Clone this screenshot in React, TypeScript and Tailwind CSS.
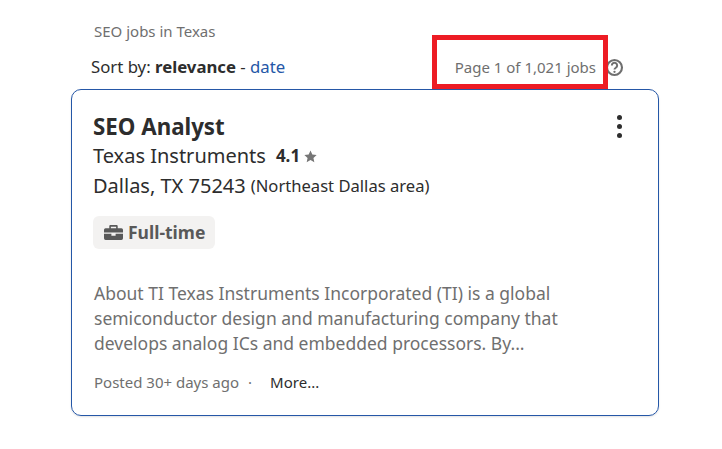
import React from "react";

export default function App() {
  return (
    <div className="relative h-[449px] w-[722px] overflow-hidden bg-white pl-[71px] pr-[63px] text-[#2d2d2d] [font-family:'Noto_Sans',sans-serif]">
      <div className="pl-[23px] pt-[21px] text-[15px] leading-[20px] text-[#6f6f6f]">SEO jobs in Texas</div>
      <div className="mt-[15px] flex h-[22px] items-center justify-between pl-[20px] pr-[35px]">
        <div className="text-[16.75px] leading-[22px]">
          Sort by: <b className="font-bold">relevance</b> - <span className="text-[#2557a7]">date</span>
        </div>
        <div className="flex items-center gap-[10px]">
          <span className="text-[15px] text-[#6f6f6f]">Page 1 of 1,021 jobs</span>
          <svg className="-ml-px" width="19" height="19" viewBox="0 0 18 18" fill="none">
            <circle cx="9" cy="9" r="7.100" stroke="#6f6f6f" strokeWidth="2" />
            <path d="M6.500 7.100a2.500 2.500 0 1 1 3.800 2.100c-.9.600-1.300 1-1.300 1.800" stroke="#6f6f6f" strokeWidth="1.900" fill="none" />
            <circle cx="9" cy="13.100" r="1.100" fill="#6f6f6f" />
          </svg>
        </div>
      </div>
      <div className="relative mt-[11px] h-[327px] w-[588px] rounded-[10px] border border-[#2557a7] pl-[21px] pt-[22px] shadow-[0_1px_2px_rgba(0,0,0,0.12)]">
        <div className="text-[22.3px] font-bold leading-[30px]">SEO Analyst</div>
        <div className="flex h-[28px] items-center text-[20px]">
          <span>Texas Instruments</span>
          <span className="ml-[10px] text-[17px] font-bold">4.1</span>
          <svg className="ml-[3px]" width="15" height="15" viewBox="0 0 24 24" fill="#767676">
            <path d="M12 2.500l2.900 6.300 6.900.8-5.100 4.700 1.400 6.800-6.100-3.400-6.100 3.400 1.400-6.800-5.100-4.700 6.900-.8z" />
          </svg>
        </div>
        <div className="mt-[2px] flex h-[28px] items-center">
          <span className="text-[20px]">Dallas, TX 75243</span>
          <span className="ml-[5px] text-[16.6px]">(Northeast Dallas area)</span>
        </div>
        <div className="mt-[16px] inline-flex h-[33px] items-center gap-[5px] rounded-[6px] bg-[#f3f2f1] pl-[11px] pr-[10px] text-[#595959]">
          <svg width="19" height="17" viewBox="0 0 18 16" fill="#595959">
            <path d="M6 1h6a1 1 0 0 1 1 1v2h3.500A1.500 1.500 0 0 1 18 5.500V8H0V5.500A1.500 1.500 0 0 1 1.500 4H5V2a1 1 0 0 1 1-1zm.5 1.500V4h5V2.500z" fillRule="evenodd" />
            <path d="M0 9.200h7V11h4V9.200h7v4.300a1.500 1.500 0 0 1-1.500 1.500h-15A1.500 1.500 0 0 1 0 13.500z" />
          </svg>
          <span className="text-[17.5px] font-bold">Full-time</span>
        </div>
        <div className="mt-[32px] pl-px text-[17.5px] leading-[25px] text-[#6f6f6f]">
          <div>About TI Texas Instruments Incorporated (TI) is a global</div>
          <div>semiconductor design and manufacturing company that</div>
          <div>develops analog ICs and embedded processors. By...</div>
        </div>
        <div className="mt-[15px] flex h-[22px] items-center pl-px text-[15px]">
          <span className="text-[#6f6f6f]">Posted 30+ days ago</span>
          <span className="ml-[9px] text-[#6f6f6f]">·</span>
          <span className="ml-[18px]">More...</span>
        </div>
        <div className="absolute right-[36px] top-[25px] flex flex-col gap-[4px]">
          <span className="h-[5px] w-[5px] rounded-full bg-[#2d2d2d]" />
          <span className="h-[5px] w-[5px] rounded-full bg-[#2d2d2d]" />
          <span className="h-[5px] w-[5px] rounded-full bg-[#2d2d2d]" />
        </div>
      </div>
      <div className="pointer-events-none absolute left-[432px] top-[35px] h-[54px] w-[176px] border-[5px] border-[#ed1c24]" />
    </div>
  );
}
